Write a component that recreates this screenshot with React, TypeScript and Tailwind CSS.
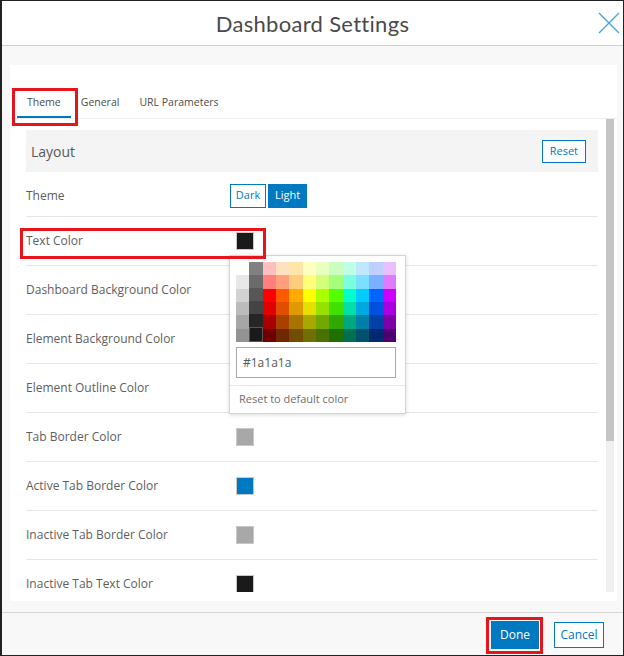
// Palette columns, top row to bottom row
const grays = [
  ['#ffffff', '#e8e8e8', '#d2d2d2', '#bcbcbc', '#a6a6a6', '#939393'],
  ['#808080', '#6b6b6b', '#575757', '#444444', '#262626', '#1a1a1a'],
];
const hues = [
  ['#ffbfbf', '#ff7f7f', '#ff0000', '#e00000', '#a80000', '#700000'],
  ['#ffe0bf', '#ffa07a', '#ff5a00', '#e04e00', '#a84000', '#702800'],
  ['#ffe6a8', '#ffcc7a', '#ffaa00', '#e09a00', '#a87400', '#704d00'],
  ['#ffffbf', '#ffff7a', '#ffff00', '#e6e000', '#a8a800', '#707000'],
  ['#e8ffbf', '#d4ff7a', '#aaff00', '#98e000', '#70a800', '#4a7000'],
  ['#ccffbf', '#a6ff7a', '#55ff00', '#40e000', '#30a800', '#207000'],
  ['#bfffe6', '#7affe0', '#00ffcc', '#00e0a8', '#00a880', '#007050'],
  ['#bfe8ff', '#7ae0ff', '#00ccff', '#00a8e0', '#0080a8', '#005070'],
  ['#bfd0ff', '#7ab0ff', '#0066ff', '#0050e0', '#0040a8', '#002870'],
  ['#e8bfff', '#e07aff', '#cc00ff', '#a800e0', '#8000a8', '#500070'],
];
const columns = [...grays, ...hues];

const rows: { label: string; swatch?: string }[] = [
  { label: 'Text Color', swatch: '#1a1a1a' },
  { label: 'Dashboard Background Color' },
  { label: 'Element Background Color' },
  { label: 'Element Outline Color' },
  { label: 'Tab Border Color', swatch: '#a8a8a8' },
  { label: 'Active Tab Border Color', swatch: '#0079c1' },
  { label: 'Inactive Tab Border Color', swatch: '#a8a8a8' },
  { label: 'Inactive Tab Text Color', swatch: '#1a1a1a' },
];

function ColorPopup() {
  return (
    <div className="absolute left-[227px] top-[254px] w-[177px] h-[159px] bg-white border border-[#d4d4d4] shadow-[0_1px_4px_rgba(0,0,0,0.15)] flex flex-col">
      <div className="px-[6px] pt-[6px]">
        <div className="flex w-[160px] h-[80px]">
          {columns.map((col, ci) => (
            <div key={ci} className="flex flex-col flex-1">
              {col.map((c, ri) => (
                <div
                  key={ri}
                  className={'flex-1 ' + (ci === 1 && ri === 5 ? 'border border-[#555]' : '')}
                  style={{ backgroundColor: c }}
                />
              ))}
            </div>
          ))}
        </div>
        <div className="mt-[5px] h-[31px] w-[160px] border border-[#aaa] flex items-center px-[6px] text-[12px] text-[#595959]">
          #1a1a1a
        </div>
      </div>
      <div className="mt-[7px] border-t border-[#e6e6e6] flex-1 flex items-center px-[9px] text-[11px] text-[#6e6e6e]">
        Reset to default color
      </div>
    </div>
  );
}

export default function App() {
  return (
    <div
      className="relative w-[624px] h-[656px] border border-[#222] border-l-2 bg-white flex flex-col overflow-hidden"
      style={{ fontFamily: '"Open Sans", "Liberation Sans", sans-serif' }}
    >
      {/* Header */}
      <div className="relative h-[45px] shrink-0 border-b border-[#cfcfcf] flex items-center justify-center">
        <h1 className="text-[22px] text-[#4a4a4a] tracking-[0.3px]" style={{ fontFamily: 'Lato, "Open Sans", sans-serif' }}>
          Dashboard Settings
        </h1>
        <svg className="absolute right-[3px] top-[11px]" width="22" height="22" viewBox="0 0 22 22">
          <path d="M1 1 L21 21 M21 1 L1 21" stroke="#4aa3dc" strokeWidth="1.4" fill="none" />
        </svg>
      </div>

      {/* Body */}
      <div className="flex-1 min-h-0 bg-[#f8f8f8] pl-[8px] pr-[6px] pt-[19px] pb-[11px] flex">
        <div className="flex-1 bg-white flex flex-col min-h-0">
          {/* Tabs */}
          <div className="h-[54px] shrink-0 flex items-end border-b border-[#eeeeee] pl-[7px]">
            <div className="px-[10px] pb-[5px] border-b-2 border-[#0079c1] text-[10.5px] text-[#4c4c4c]">Theme</div>
            <div className="px-[10px] pb-[5px] border-b-2 border-transparent text-[10.5px] text-[#4c4c4c]">General</div>
            <div className="px-[10px] pb-[5px] border-b-2 border-transparent text-[10.5px] text-[#4c4c4c]">URL Parameters</div>
          </div>

          {/* Scroll area */}
          <div className="flex-1 flex min-h-0 pl-[16px] pr-[3px] pb-[9px]">
            <div className="flex-1 overflow-hidden pt-[11px] pr-[8px]">
              <div className="h-[42px] bg-[#f4f4f4] flex items-center justify-between pl-[5px] pr-[12px]">
                <span className="text-[14px] text-[#595959]">Layout</span>
                <button className="h-[23px] px-[7px] border border-[#0079c1] bg-white text-[11px] text-[#0079c1]">
                  Reset
                </button>
              </div>
              <div className="h-[45px] border-b border-[#e6e6e6] flex items-center pt-[3px]">
                <span className="w-[204px] text-[12px] text-[#5e5e5e]">Theme</span>
                <div className="flex gap-[2px]">
                  <button className="h-[24px] w-[36px] border border-[#0079c1] bg-white text-[11px] text-[#0079c1]">Dark</button>
                  <button className="h-[24px] w-[39px] border border-[#0079c1] bg-[#0079c1] text-[11px] text-white">Light</button>
                </div>
              </div>
              {rows.map((r) => (
                <div key={r.label} className="h-[49px] shrink-0 border-b border-[#e6e6e6] flex items-center">
                  <span className="w-[210px] text-[12px] text-[#5e5e5e]">{r.label}</span>
                  {r.swatch && (
                    <div className="w-[18px] h-[18px] border border-[#c8c8c8]" style={{ backgroundColor: r.swatch }} />
                  )}
                </div>
              ))}
            </div>
            {/* Scrollbar */}
            <div className="w-[8px] bg-[#f0f0f0] flex flex-col">
              <div className="h-[322px] bg-[#c4c4c4]" />
            </div>
          </div>
        </div>
      </div>

      {/* Footer */}
      <div className="h-[43px] shrink-0 border-t border-[#d6d6d6] bg-[#f8f8f8] flex items-center justify-end gap-[15px] pr-[19px] pt-[2px]">
        <button className="h-[28px] w-[48px] bg-[#0079c1] text-white text-[12px]">Done</button>
        <button className="h-[26px] w-[50px] border border-[#0079c1] bg-white text-[#0079c1] text-[12px]">Cancel</button>
      </div>

      <ColorPopup />

      {/* Red annotation boxes */}
      <div className="absolute left-[10px] top-[87px] w-[66px] h-[38px] border-[3px] border-[#e8141c]" />
      <div className="absolute left-[18px] top-[227px] w-[246px] h-[31px] border-[3px] border-[#e8141c]" />
      <div className="absolute left-[484px] top-[616px] w-[57px] h-[37px] border-[3px] border-[#e8141c]" />
    </div>
  );
}
